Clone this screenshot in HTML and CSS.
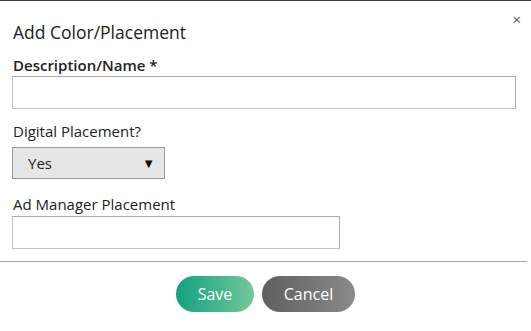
FILE: index.html
```html
<!DOCTYPE html>
<html lang="en">
<head>
    <meta charset="UTF-8">
    <title>Add Color/Placement</title>
    <link rel="stylesheet" href="styles.css">
</head>
<body>
    <div class="modal">
        <div class="modal-body">
            <button class="close-btn">&times;</button>
            <h1>Add Color/Placement</h1>
            <div class="form-group group-desc">
                <label class="required" for="desc">Description/Name *</label>
                <input type="text" id="desc" class="input-wide">
            </div>
            <div class="form-group group-digital">
                <label for="digital">Digital Placement?</label>
                <div class="select-box" id="digital">
                    <span>Yes</span>
                    <span class="arrow">&#9660;</span>
                </div>
            </div>
            <div class="form-group group-ad">
                <label for="admanager">Ad Manager Placement</label>
                <input type="text" id="admanager" class="input-mid">
            </div>
        </div>
        <div class="modal-footer">
            <button class="btn btn-save">Save</button>
            <button class="btn btn-cancel">Cancel</button>
        </div>
    </div>
</body>
</html>
```

FILE: styles.css
```css
:root {
    --text-color: #222; --border-color: #a8a8a8; --rule-color: #a0a0a0;
}
* { box-sizing: border-box; }
body { margin: 0; font-family: 'Open Sans', sans-serif; color: var(--text-color); background: #fff; }
.modal { width: 531px; height: 331px; border-top: 1px solid #3a3a3a; }
.modal-body { position: relative; padding: 19px 15px 0 12px; }
.close-btn { position: absolute; top: 8px; right: 10px; border: none; background: none; font-size: 15px; color: #555; padding: 0; cursor: pointer; font-family: 'Open Sans', sans-serif; }
h1 { font-size: 17.5px; font-weight: 400; margin: 0 0 11px 1px; line-height: 24px; }
label { display: block; font-size: 15px; line-height: 20px; margin: 0 0 2px 1px; }
label.required { font-weight: 600; margin-bottom: 1px; }
.group-desc { margin-bottom: 12px; }
.group-digital { margin-bottom: 15px; }
.group-digital label { margin-bottom: 6px; }
input { display: block; height: 33px; border: 1px solid var(--border-color); border-left-color: #c4c4c4; border-bottom-color: #c4c4c4; font-size: 14px; padding: 4px 8px; }
.input-wide { width: 504px; }
.input-mid { width: 328px; }
.select-box { display: flex; justify-content: space-between; align-items: center; width: 153px; height: 32px; background: #e6e6e6; border: 1px solid #9a9a9a; padding: 0 9px 0 15px; font-size: 15px; }
.arrow { font-size: 13px; color: #111; }
.modal-footer { border-top: 1px solid var(--rule-color); margin: 12px 4px 0 0; padding-top: 14px; display: flex; justify-content: center; gap: 8px; }
.btn { height: 36px; border: none; border-radius: 18px; color: #fff; font-size: 16px; font-family: 'Open Sans', sans-serif; cursor: pointer; }
.btn-save { width: 78px; background: linear-gradient(to right, #13a17f, #72c89b); margin-left: 4px; }
.btn-cancel { width: 93px; background: linear-gradient(to right, #5f5f5f, #8a8a8a); }
```
